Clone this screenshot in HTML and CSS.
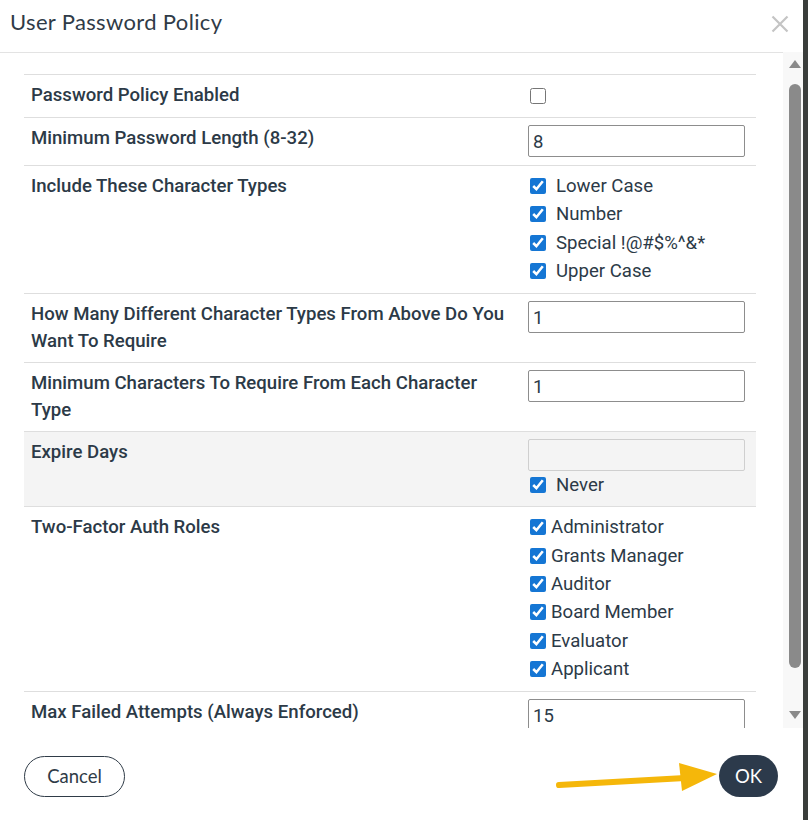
FILE: index.html
```html
<!DOCTYPE html>
<html lang="en">
<head>
  <meta charset="UTF-8" />
  <title>User Password Policy</title>
  <link rel="stylesheet" href="styles.css">
</head>
<body>
  <div class="dialog">
    <div class="dialog-header">
      <h3>User Password Policy</h3>
      <svg class="close" width="18" height="18" viewBox="0 0 18 18"><path d="M1.5 1.5 L16.5 16.5 M16.5 1.5 L1.5 16.5" stroke="#c4c4c4" stroke-width="2.2" fill="none"/></svg>
    </div>

    <div class="dialog-body">
      <div class="scroll">
        <div class="policy">
          <div class="row">
            <div class="label">Password Policy Enabled</div>
            <div class="value"><input type="checkbox" class="cb single"></div>
          </div>
          <div class="row">
            <div class="label">Minimum Password Length (8-32)</div>
            <div class="value"><input type="text" class="field" value="8"></div>
          </div>
          <div class="row">
            <div class="label">Include These Character Types</div>
            <div class="value list">
              <label class="opt"><input type="checkbox" class="cb" checked> Lower Case</label>
              <label class="opt"><input type="checkbox" class="cb" checked> Number</label>
              <label class="opt"><input type="checkbox" class="cb" checked> Special !@#$%^&amp;*</label>
              <label class="opt"><input type="checkbox" class="cb" checked> Upper Case</label>
            </div>
          </div>
          <div class="row">
            <div class="label">How Many Different Character Types From Above Do You Want To Require</div>
            <div class="value"><input type="text" class="field" value="1"></div>
          </div>
          <div class="row">
            <div class="label">Minimum Characters To Require From Each Character Type</div>
            <div class="value"><input type="text" class="field" value="1"></div>
          </div>
          <div class="row muted">
            <div class="label">Expire Days</div>
            <div class="value">
              <input type="text" class="field" disabled>
              <label class="opt"><input type="checkbox" class="cb" checked> Never</label>
            </div>
          </div>
          <div class="row">
            <div class="label">Two-Factor Auth Roles</div>
            <div class="value list">
              <label class="opt tight"><input type="checkbox" class="cb" checked>Administrator</label>
              <label class="opt tight"><input type="checkbox" class="cb" checked>Grants Manager</label>
              <label class="opt tight"><input type="checkbox" class="cb" checked>Auditor</label>
              <label class="opt tight"><input type="checkbox" class="cb" checked>Board Member</label>
              <label class="opt tight"><input type="checkbox" class="cb" checked>Evaluator</label>
              <label class="opt tight"><input type="checkbox" class="cb" checked>Applicant</label>
            </div>
          </div>
          <div class="row">
            <div class="label">Max Failed Attempts (Always Enforced)</div>
            <div class="value"><input type="text" class="field" value="15"></div>
          </div>
        </div>
      </div>
      <div class="scrollbar">
        <span class="arrow up"></span>
        <span class="thumb"></span>
        <span class="arrow down"></span>
      </div>
    </div>

    <div class="dialog-footer">
      <button class="btn cancel">Cancel</button>
      <button class="btn ok">OK</button>
      <svg class="pointer" width="170" height="40" viewBox="0 0 170 40">
        <path d="M4 30 L130 23" stroke="#f5b70a" stroke-width="6" stroke-linecap="round" fill="none"/>
        <path d="M124 8 L162 19 L127 36 Z" fill="#f5b70a"/>
      </svg>
    </div>
  </div>
</body>
</html>
```

FILE: styles.css
```css
body {
  margin: 0;
  background: #3a3d3b;
  font-family: Roboto, 'Liberation Sans', sans-serif;
  color: #2c3a47;
}
.dialog {
  width: 803px;
  height: 820px;
  background: #fff;
  display: flex;
  flex-direction: column;
}
.dialog-header {
  height: 52px;
  border-bottom: 1px solid #e3e3e3;
  display: flex;
  align-items: flex-start;
  justify-content: space-between;
  padding: 0 14px 0 10px;
}
.dialog-header h3 {
  margin: 8px 0 0;
  font-family: Lato, 'Open Sans', sans-serif;
  font-weight: 400;
  font-size: 22px;
  color: #2f3b47;
  letter-spacing: 0.35px;
}
.close { margin-top: 15px; }

.dialog-body {
  display: flex;
  height: 675px;
}
.scroll {
  flex: 1;
  overflow: hidden;
  padding: 21px 27px 0 24px;
}
.scrollbar {
  width: 20px;
  background: #f8f8f8;
  position: relative;
  margin-top: -1px;
}
.thumb {
  position: absolute;
  left: 6px;
  top: 32px;
  width: 12px;
  height: 584px;
  background: #8a8a8a;
  border-radius: 6px;
}
.arrow {
  position: absolute;
  left: 6px;
  width: 0; height: 0;
  border-left: 6px solid transparent;
  border-right: 6px solid transparent;
}
.arrow.up { top: 8px; border-bottom: 8px solid #8a8a8a; }
.arrow.down { top: 659px; border-top: 8px solid #8a8a8a; }

.policy { border-top: 1px solid #dedede; }
.row {
  display: grid;
  grid-template-columns: 1fr 233px;
  border-bottom: 1px solid #dedede;
}
.row.muted { background: #f4f4f4; }
.label {
  padding: 7px 10px 7px 7px;
  font-size: 18.6px;
  font-weight: 500;
  line-height: 27px;
  color: #2c3a47;
}
.value {
  padding: 7px 11px 8px 5px;
  display: flex;
  flex-direction: column;
  align-items: flex-start;
}
.value.list { padding-top: 6px; padding-bottom: 8px; }
.row.muted .value { padding-bottom: 7px; }
.field {
  box-sizing: border-box;
  width: 100%;
  height: 32px;
  margin: 0;
  border: 1px solid #8d8d8d;
  border-radius: 2px;
  padding: 2px 8px 0 4px;
  font-family: Roboto, sans-serif;
  font-size: 18.5px;
  color: #2c3a47;
  background: #fff;
}
.field:disabled { background: #f4f4f4; border-color: #cfcfcf; }
.cb {
  width: 16px;
  height: 16px;
  margin: 0 10px 0 2px;
  accent-color: #1576d4;
  flex: none;
}
.cb.single { margin-top: 6px; margin-bottom: 5px; }
.opt {
  display: flex;
  align-items: center;
  height: 28.3px;
  font-size: 18.6px;
  color: #2c3a47;
  white-space: nowrap;
}
.row.muted .opt { height: 28px; }
.opt.tight .cb { margin-right: 5px; }

.dialog-footer {
  flex: 1;
  display: flex;
  align-items: center;
  justify-content: space-between;
  padding: 4px 25px 0 24px;
  position: relative;
}
.btn {
  font-family: Lato, 'Open Sans', sans-serif;
  font-size: 18.5px;
  border-radius: 22px;
  cursor: pointer;
}
.cancel {
  width: 101px;
  height: 41px;
  background: #fff;
  border: 1px solid #2f3b47;
  color: #2f3b47;
}
.ok {
  width: 59px;
  height: 42px;
  border: none;
  background: #2c3a4b;
  color: #fff;
}
.pointer {
  position: absolute;
  left: 555px;
  top: 27px;
}
```
